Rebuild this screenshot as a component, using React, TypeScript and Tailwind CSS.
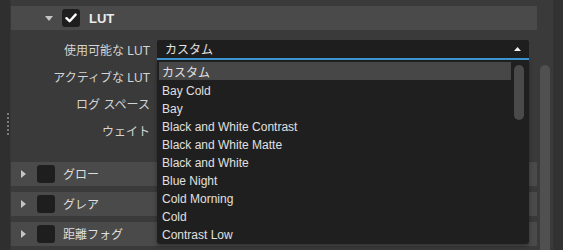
import React from 'react'

const items = [
  'カスタム',
  'Bay Cold',
  'Bay',
  'Black and White Contrast',
  'Black and White Matte',
  'Black and White',
  'Blue Night',
  'Cold Morning',
  'Cold',
  'Contrast Low',
]

const labels = ['使用可能な LUT', 'アクティブな LUT', 'ログ スペース', 'ウェイト']

const font = { fontFamily: '"Liberation Sans", "Noto Sans CJK JP", sans-serif' }

function TriDown() {
  return (
    <svg width="8" height="5" viewBox="0 0 8 5" className="shrink-0">
      <path d="M0 0 L8 0 L4 5 Z" fill="#c4c4c4" />
    </svg>
  )
}

function TriRight() {
  return (
    <svg width="5" height="8" viewBox="0 0 5 8" className="shrink-0">
      <path d="M0 0 L5 4 L0 8 Z" fill="#c4c4c4" />
    </svg>
  )
}

function CollapsedRow({ label }: { label: string }) {
  return (
    <div className="flex h-[24px] items-center bg-[#4a4a4a]">
      <div className="ml-[10px] flex w-[5px] items-center">
        <TriRight />
      </div>
      <div className="ml-[11px] h-[18px] w-[18px] rounded-[3px] bg-[#1e1e1e]" />
      <span className="ml-[8px] pt-[2px] text-[12px] text-[#dedede]">{label}</span>
    </div>
  )
}

export default function App() {
  return (
    <div className="flex h-[250px] w-[563px] bg-[#3a3a3a] text-[#dcdcdc]" style={font}>
      {/* left dock strip with grip */}
      <div className="flex w-[11px] shrink-0 bg-[#2f2f2f]">
        <div className="flex w-[10px] flex-col pl-[7px] pt-[113px]">
          <div className="flex flex-col gap-[2px]">
            {[0, 1, 2, 3, 4, 5].map(i => (
              <div key={i} className="h-[2px] w-[2px] bg-[#7a7a7a]" />
            ))}
          </div>
        </div>
        <div className="w-[1px] bg-[#363636]" />
      </div>

      {/* main panel */}
      <div className="relative flex w-[526px] shrink-0 flex-col pt-[6px]">
        {/* LUT header */}
        <div className="flex h-[24px] items-center bg-[#4a4a4a]">
          <div className="ml-[34px]">
            <TriDown />
          </div>
          <div className="ml-[9px] flex h-[18px] w-[18px] items-center justify-center rounded-[3px] bg-[#1e1e1e]">
            <svg width="12" height="10" viewBox="0 0 12 10">
              <path d="M1.5 5.2 L4.6 8.2 L10.6 1.6" stroke="#ffffff" strokeWidth="2.4" fill="none" strokeLinecap="round" strokeLinejoin="round" />
            </svg>
          </div>
          <span className="ml-[9px] pt-[1px] text-[13px] font-bold text-[#ececec]">LUT</span>
        </div>

        {/* properties */}
        <div className="mt-[6px] flex flex-col">
          {labels.map((l, i) => (
            <div key={l} className="flex h-[27px] items-center">
              <div className="w-[140px] pr-[1px] pt-[2px] text-right text-[12px] text-[#d4d4d4]">{l}</div>
              {i === 0 && (
                <div className="ml-[6px] flex h-[20px] w-[372px] items-center justify-between rounded-t-[2px] border-b-2 border-[#3d9ad6] bg-[#1e1e1e] pl-[8px] pr-[8px]">
                  <span className="pt-[2px] text-[12px] text-[#e2e2e2]">カスタム</span>
                  <svg width="7" height="4" viewBox="0 0 7 4">
                    <path d="M0 4 L3.5 0 L7 4 Z" fill="#f0f0f0" />
                  </svg>
                </div>
              )}
            </div>
          ))}
        </div>

        {/* collapsed groups */}
        <div className="mt-[18px] flex flex-col gap-[6px]">
          <CollapsedRow label="グロー" />
          <CollapsedRow label="グレア" />
          <CollapsedRow label="距離フォグ" />
        </div>

        {/* open dropdown list */}
        <div className="absolute left-[146px] top-[60px] flex h-[184px] w-[372px] rounded-b-[3px] bg-[#1f1f1f] shadow-[0_2px_4px_rgba(0,0,0,0.35)]">
          <div className="flex flex-1 flex-col pl-[2px] pt-[2px]">
            {items.map((it, i) => (
              <div
                key={it}
                className={`flex h-[18px] items-center pl-[3px] pt-[3px] text-[12px] text-[#e0e0e0] ${i === 0 ? 'bg-[#474747]' : ''}`}
              >
                {it}
              </div>
            ))}
          </div>
          <div className="w-[18px] pl-[3px] pt-[5px]">
            <div className="h-[55px] w-[10px] rounded-[5px] bg-[#4a4a4a]" />
          </div>
        </div>
      </div>

      {/* outer scrollbar */}
      <div className="w-[16px] shrink-0 pl-[3px] pt-[65px]">
        <div className="h-full w-[10px] rounded-t-[5px] bg-[#505050]" />
      </div>

      {/* right dock strip */}
      <div className="w-[10px] shrink-0 bg-[#323232]" />
    </div>
  )
}
